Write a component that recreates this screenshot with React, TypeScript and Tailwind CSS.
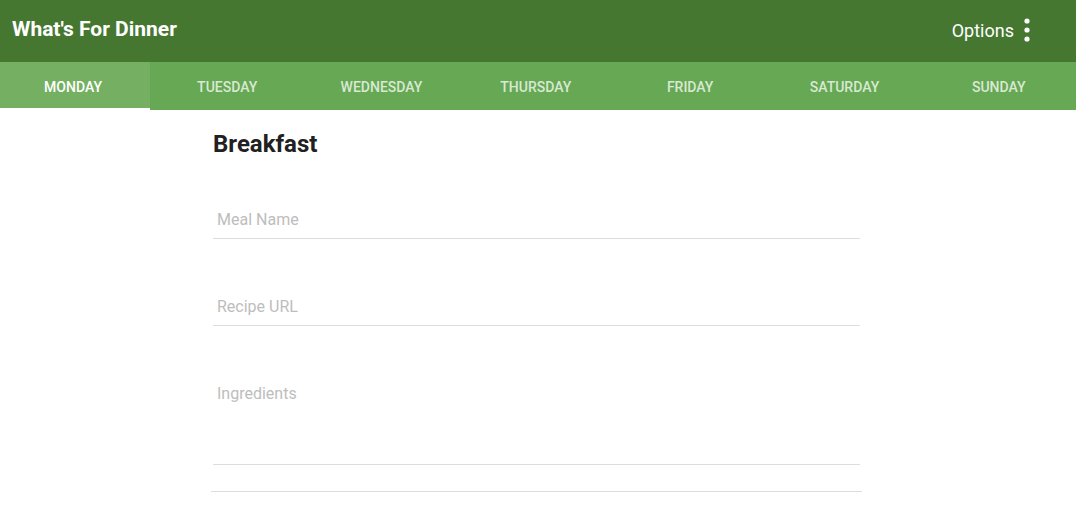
import { useState } from "react";

const days = [
  "MONDAY",
  "TUESDAY",
  "WEDNESDAY",
  "THURSDAY",
  "FRIDAY",
  "SATURDAY",
  "SUNDAY",
];

export default function App() {
  const [active, setActive] = useState(0);
  const [meal, setMeal] = useState("");
  const [url, setUrl] = useState("");
  const [ingredients, setIngredients] = useState("");

  return (
    <div className="min-h-[521px] bg-white font-['Roboto',sans-serif]">
      <div className="flex h-[62px] items-center justify-between bg-[#467731] pb-[2px] pl-3 pr-[46px] text-white">
        <h1 className="text-[21px] font-bold">What's For Dinner</h1>
        <button className="flex items-center gap-[10px] text-[18px]">
          Options
          <svg width="6" height="24" viewBox="0 0 6 24" fill="white">
            <circle cx="3" cy="3" r="2.6" />
            <circle cx="3" cy="12" r="2.6" />
            <circle cx="3" cy="21" r="2.6" />
          </svg>
        </button>
      </div>

      <div className="flex h-12 bg-[#66a853]">
        {days.map((day, index) => {
          return (
            <button
              key={day}
              onClick={() => setActive(index)}
              className={
                (index === 0 ? "w-[150px] pr-[4px] " : "flex-1 ") +
                (active === index
                  ? "border-b-2 border-white bg-[#75b062] pt-[4px] text-white"
                  : "pt-[2px] text-[#d9e9d3]") +
                " text-[14px] font-medium"
              }
            >
              {day}
            </button>
          );
        })}
      </div>

      <div className="ml-[213px] w-[647px]">
        <h2 className="mt-[16px] text-[24px] font-bold text-[#212121]">
          Breakfast
        </h2>

        <input
          className="mt-[43px] block h-[34px] w-full border-b border-[#dddddd] px-[4px] pb-[5px] text-[16px] text-[#212121] outline-none placeholder:text-[#bdbdbd]"
          placeholder="Meal Name"
          value={meal}
          onChange={(e) => setMeal(e.target.value)}
        />

        <input
          className="mt-[53px] block h-[34px] w-full border-b border-[#dddddd] px-[4px] pb-[5px] text-[16px] text-[#212121] outline-none placeholder:text-[#bdbdbd]"
          placeholder="Recipe URL"
          value={url}
          onChange={(e) => setUrl(e.target.value)}
        />

        <textarea
          className="mt-[53px] block h-[86px] w-full resize-none border-b border-[#dddddd] px-[4px] pt-[3px] text-[16px] text-[#212121] outline-none placeholder:text-[#bdbdbd]"
          placeholder="Ingredients"
          value={ingredients}
          onChange={(e) => setIngredients(e.target.value)}
        />
      </div>

      <div className="ml-[211px] mt-[26px] w-[651px] border-b border-[#dddddd]" />
    </div>
  );
}
